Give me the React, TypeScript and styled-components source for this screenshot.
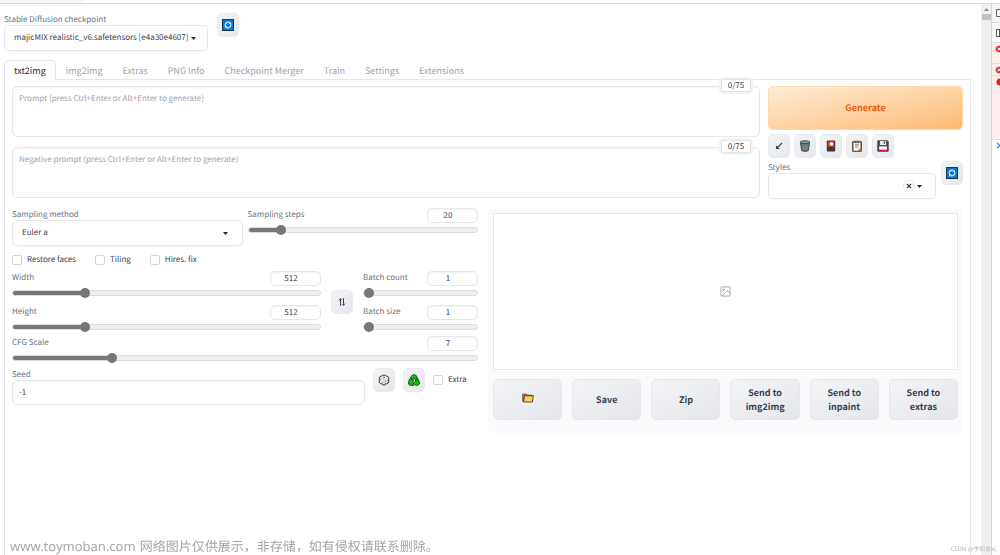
import React, { useState } from "react";
import styled, { createGlobalStyle, css } from "styled-components";

const GlobalStyle = createGlobalStyle`
  *, *::before, *::after { box-sizing: border-box; }
  body {
    margin: 0;
    background: #fff;
    color: #374151;
    font-family: "Noto Sans CJK SC", "Noto Sans", sans-serif;
    font-size: 8px;
    line-height: 12px;
    text-rendering: geometricPrecision;
  }
  button, input, select, textarea { font: inherit; color: inherit; margin: 0; text-rendering: inherit; }
  button { cursor: pointer; }
`;

const Window = styled.div`
  display: flex;
  flex-direction: column;
  min-height: 100vh;
`;

const BrowserEdge = styled.div`
  height: 4px;
  flex: none;
  background: linear-gradient(90deg, #f5f5f5 0 83px, #fff 83px);
  border-bottom: 1px solid #d9dadb;
`;

const Viewport = styled.div`
  display: flex;
  flex: 1;
`;

const Page = styled.main`
  flex: 1;
  min-width: 0;
  display: flex;
  flex-direction: column;
  padding: 9px 10px 0 4px;
`;

const ScrollBar = styled.div`
  flex: none;
  width: 10px;
  background: #f0f0f0;
  display: flex;
  flex-direction: column;
  align-items: center;
  gap: 3px;
  padding-top: 4px;
`;

const ScrollThumb = styled.div`
  width: 9px;
  height: 6px;
  background: #c1c1c1;
`;

const DevTools = styled.aside`
  flex: none;
  width: 9px;
  border-left: 1px solid #d5d5d5;
  overflow: hidden;
`;

const DevCell = styled.div<{ $height: number; $tone?: "bar" | "error" }>`
  height: ${(p) => p.$height}px;
  padding: 2px 0 0 3px;
  border-bottom: 1px solid ${(p) => (p.$tone === "error" ? "#fbd5d5" : p.$tone ? "#dcdcdc" : "transparent")};
  background: ${(p) => (p.$tone === "error" ? "#ffeeee" : p.$tone ? "#f6f6f6" : "#fff")};
  svg { display: block; }
`;

const Label = styled.label`
  display: block;
  height: 12px;
  line-height: 14px;
  color: #6b7280;
  white-space: nowrap;
`;

const ModelBar = styled.div`
  display: flex;
  gap: 9px;
  height: 47px;
`;

const ModelField = styled.div`
  width: 204px;
`;

const SelectWrap = styled.div`
  position: relative;
`;

const fieldBox = css`
  border: 1px solid #e5e7eb;
  border-radius: 5px;
  background: #fff;
  box-shadow: inset 0 1px 2px rgba(0, 0, 0, 0.05);
  outline: none;
`;

const Select = styled.select`
  ${fieldBox}
  appearance: none;
  display: block;
  width: 100%;
  height: 26px;
  padding: 0 10px 0 9px;
  box-shadow: 0 1px 2px rgba(0, 0, 0, 0.04);
`;

const Caret = styled.svg<{ $right: number }>`
  position: absolute;
  top: 12px;
  right: ${(p) => p.$right}px;
  pointer-events: none;
`;

const ClearButton = styled.button`
  position: absolute;
  top: 7px;
  right: 21px;
  width: 12px;
  height: 12px;
  padding: 0;
  display: grid;
  place-items: center;
  border: 1px solid #e5e7eb;
  border-radius: 50%;
  background: #fff;
`;

const ToolButton = styled.button`
  flex: none;
  width: 22px;
  height: 24px;
  padding: 0;
  display: grid;
  place-items: center;
  border: 1px solid #e8eaee;
  border-radius: 5px;
  background: linear-gradient(to bottom right, #f3f4f6, #e5e7eb);
`;

const TabList = styled.nav`
  display: flex;
  height: 20px;
  position: relative;
  margin-bottom: -1px;
`;

const Tab = styled.button<{ $active?: boolean }>`
  height: 20px;
  padding: 0 9px;
  border: 1px solid ${(p) => (p.$active ? "#e5e7eb" : "transparent")};
  border-bottom: 0;
  border-radius: 5px 5px 0 0;
  background: ${(p) => (p.$active ? "#fff" : "transparent")};
  color: ${(p) => (p.$active ? "#1f2937" : "#9ca3af")};
  font-size: 9px;
  line-height: 18px;
  white-space: nowrap;
`;

const Panel = styled.section`
  flex: 1;
  border: 1px solid #e5e7eb;
  border-bottom: 0;
  padding: 6px 7px 0;
`;

const TopArea = styled.div`
  display: flex;
  gap: 8px;
`;

const Prompts = styled.div`
  flex: 1;
  display: flex;
  flex-direction: column;
  gap: 10px;
`;

const PromptBox = styled.div`
  position: relative;
`;

const Prompt = styled.textarea`
  ${fieldBox}
  display: block;
  width: 100%;
  height: 51px;
  padding: 6px;
  resize: none;
  &::placeholder { color: #9ca3af; opacity: 1; }
`;

const Counter = styled.span`
  position: absolute;
  top: -7px;
  right: 9px;
  width: 30px;
  height: 13px;
  border: 1px solid #dfe1e5;
  border-radius: 2px;
  background: #fff;
  box-shadow: 0 0 0 2px #f3f4f5;
  line-height: 12px;
  text-align: center;
`;

const Actions = styled.div`
  width: 195px;
  display: flex;
  flex-direction: column;
`;

const Generate = styled.button`
  height: 44px;
  border: 1px solid #fed7aa;
  border-radius: 5px;
  background: linear-gradient(to bottom right, #ffedd5, #fdba74);
  color: #ea580c;
  font-size: 9px;
  font-weight: 700;
`;

const ToolRow = styled.div`
  display: flex;
  gap: 4px;
  margin-top: 4px;
`;

const StylesRow = styled.div`
  display: flex;
  gap: 5px;
  margin-top: 3px;
`;

const Grow = styled.div`
  flex: 1;
  min-width: 0;
`;

const WorkArea = styled.div`
  display: grid;
  grid-template-columns: 466fr 475fr;
  align-items: start;
  gap: 10px;
  margin-top: 9px;
`;

const Settings = styled.div`
  min-width: 0;
`;

const SamplingRow = styled.div`
  display: grid;
  grid-template-columns: 1fr 1fr;
  gap: 5px;
`;

const SliderBlock = styled.div`
  min-width: 0;
`;

const SliderHead = styled.div`
  display: flex;
  justify-content: space-between;
  height: 15px;
`;

const NumberBox = styled.input`
  ${fieldBox}
  width: 51px;
  height: 15px;
  padding: 0 9px 0 0;
  text-align: center;
  appearance: textfield;
  &::-webkit-inner-spin-button { appearance: none; margin: 0; }
`;

const Range = styled.input`
  appearance: none;
  display: block;
  width: 100%;
  height: 10px;
  margin-top: 2px;
  background: transparent;
  &::-webkit-slider-runnable-track {
    height: 6px;
    border: 1px solid #dcdcdc;
    border-radius: 3px;
    background: linear-gradient(90deg, #767676 0 var(--fill), #efefef var(--fill));
    background-origin: border-box;
  }
  &::-webkit-slider-thumb {
    appearance: none;
    width: 10px;
    height: 10px;
    margin-top: -3px;
    border-radius: 50%;
    background: #767676;
  }
`;

const CheckRow = styled.div`
  display: flex;
  gap: 19px;
  margin: 8px 0 5px;
`;

const CheckLabel = styled.label`
  display: flex;
  align-items: center;
  gap: 5px;
  white-space: nowrap;
`;

const CheckBox = styled.input`
  appearance: none;
  width: 10px;
  height: 10px;
  border: 1px solid #d1d5db;
  border-radius: 2px;
  background: #fff;
  &:checked { background: #767676; }
`;

const SizeRow = styled.div`
  display: flex;
  align-items: center;
  gap: 10px;
`;

const Stack = styled.div<{ $narrow?: boolean }>`
  display: flex;
  flex-direction: column;
  gap: 7px;
  ${(p) => (p.$narrow ? "width: 115px;" : "flex: 1;")}
`;

const CfgRow = styled.div`
  margin-top: 4px;
`;

const SeedRow = styled.div`
  display: flex;
  gap: 8px;
  margin-top: 5px;
`;

const SeedInput = styled.input`
  ${fieldBox}
  display: block;
  width: 100%;
  height: 25px;
  padding: 0 6px;
`;

const SeedTools = styled.div`
  display: flex;
  gap: 8px;
  width: 105px;
  align-items: flex-start;
`;

const SeedExtra = styled.div`
  padding-top: 6px;
`;

const Results = styled.div`
  min-width: 0;
  margin-top: 1px;
  padding: 4px 5px 13px;
  border-radius: 5px;
  background: #f9fafb;
`;

const Gallery = styled.div`
  height: 157px;
  display: grid;
  place-items: center;
  border: 1px solid #e5e7eb;
  background: #fff;
`;

const ResultActions = styled.div`
  display: grid;
  grid-template-columns: repeat(6, 1fr);
  gap: 10px;
  margin-top: 9px;
`;

const ResultButton = styled.button`
  height: 41px;
  padding: 0 12px;
  border: 1px solid #e5e7eb;
  border-radius: 5px;
  background: linear-gradient(to bottom right, #f3f4f6, #e5e7eb);
  color: #374151;
  font-size: 9px;
  font-weight: 700;
  line-height: 14px;
`;

const Watermark = styled.p`
  position: fixed;
  left: 10px;
  bottom: 0;
  margin: 0;
  display: flex;
  align-items: center;
  gap: 4px;
  color: #a6a6a6;
  font-size: 13px;
  line-height: 18px;
  white-space: nowrap;
`;

const Site = styled.span`
  font-family: "Noto Sans", sans-serif;
`;

const Credit = styled.p`
  position: fixed;
  right: 4px;
  bottom: 2px;
  margin: 0;
  color: #b5b5b5;
  font-size: 6px;
  line-height: 9px;
  white-space: nowrap;
`;

const RefreshIcon = () => (
  <svg width="12" height="12" viewBox="0 0 12 12" fill="none">
    <rect x=".5" y=".5" width="11" height="11" fill="#0078d7" stroke="#17384f" />
    <path d="M3.3 7A2.9 2.9 0 0 1 7.6 3.600M8.700 5A2.900 2.900 0 0 1 4.400 8.400" stroke="#e4f2fc" strokeWidth="1.200" />
    <path d="M9 2.600v2.500H6.500zM3 9.400V6.900h2.500z" fill="#e4f2fc" />
  </svg>
);

const ArrowIcon = () => (
  <svg width="12" height="12" viewBox="0 0 12 12" fill="none" stroke="#374151">
    <path d="M9 3L4.500 7.500" strokeWidth="1.100" />
    <path d="M3 5.200V9h3.800z" fill="#374151" stroke="none" />
  </svg>
);

const TrashIcon = () => (
  <svg width="12" height="12" viewBox="0 0 12 12">
    <path d="M1.4 2.4l1.3 8.4q3.3 1.2 6.6 0l1.3-8.4z" fill="#68777b" stroke="#30393c" strokeWidth=".8" />
    <ellipse cx="6" cy="2.2" rx="4.9" ry="1.5" fill="#87979b" stroke="#30393c" strokeWidth=".8" />
    <path d="M4 5l.4 5M6 5v5.3M8 5l-.4 5" stroke="#89989c" strokeWidth=".6" />
  </svg>
);

const CardIcon = () => (
  <svg width="12" height="12" viewBox="0 0 12 12">
    <rect x="1.8" y=".5" width="8.4" height="11" rx="1" fill="#333" />
    <rect x="2.8" y="1.3" width="6.4" height="6.4" fill="#f03a17" />
    <circle cx="6.4" cy="4" r="1.8" fill="#fff" />
    <path d="M2.8 7.7q3.2-2.4 6.4 0v2.8H2.8z" fill="#3d3a3a" />
  </svg>
);

const ClipboardIcon = () => (
  <svg width="12" height="12" viewBox="0 0 12 12">
    <rect x="1.5" y="1.4" width="9" height="10.2" rx=".7" fill="#a57b50" stroke="#463a30" strokeWidth=".8" />
    <path d="M2.8 2.8h6.4v5.4l-2 2.2H2.8z" fill="#fff" />
    <path d="M9.2 8.2h-2v2.2z" fill="#b9bcc0" />
    <path d="M4 2.8V1.6h1Q6-.4 7 1.6h1v1.2z" fill="#9ca3a8" stroke="#333" strokeWidth=".6" />
    <path d="M4 4.6h4M4 6h4M4 7.4h2.6" stroke="#555" strokeWidth=".6" />
  </svg>
);

const SaveIcon = () => (
  <svg width="12" height="12" viewBox="0 0 12 12">
    <path d="M.8.8h9.6l.8.8v9.6H.8z" fill="#55595d" stroke="#292c2f" strokeWidth=".8" />
    <path d="M3 1h6v4H3z" fill="#e8eaec" />
    <path d="M6.8 1.6H8v2.2H6.8z" fill="#333" />
    <path d="M2.2 6.4h7.6v3.4H2.2z" fill="#fff" />
    <path d="M2.2 9.8h7.6v1.4H2.2z" fill="#e3135c" />
  </svg>
);

const SwapIcon = () => (
  <svg width="10" height="10" viewBox="0 0 10 10" fill="none" stroke="#374151" strokeWidth="1">
    <path d="M3.5 8.8V1.8M2 3.400l1.500-1.800M6.500 1.200v7M8 6.600L6.500 8.400" />
    <path d="M3.500 1.600l1.100 1.300M6.500 8.400L5.400 7.100" />
  </svg>
);

const DiceIcon = () => (
  <svg width="12" height="12" viewBox="0 0 12 12" strokeLinejoin="round">
    <path d="M6 .8l4.7 2.4v5.4L6 11.2 1.3 8.6V3.2z" fill="#f4f4f4" stroke="#2d2d2d" strokeWidth=".9" />
    <path d="M1.5 3.4L6 5.8l4.5-2.4M6 5.8V11" fill="none" stroke="#999" strokeWidth=".5" />
    <circle cx="6" cy="3.4" r=".8" fill="#e02020" />
    <path d="M2.8 5.4v1M4.4 8.2v1M7.4 6.8v1M9.3 5.8v1M7.4 9v.8M9.3 7.8v.8" stroke="#222" strokeWidth=".8" />
  </svg>
);

const RecycleIcon = () => (
  <svg width="12" height="12" viewBox="0 0 12 12" strokeLinejoin="round">
    <g fill="#13c60d" stroke="#06340a" strokeWidth=".8">
      <path d="M3.400 2.200Q4.200.6 6 .6T8.600 2.200L9.600 4.600 7 5.600 5.800 3.800 4.800 5.600 2.600 4.400z" />
      <path d="M1.600 4.900l3.400.4.400 2-1 .4 1.200 1v2.700H2.400Q-.2 10.800.6 8z" />
      <path d="M10 5L11.300 8q.8 2.600-1.600 3.300H7.400L5.900 9.300l1.600-1.900.900.300L7.300 6z" />
    </g>
  </svg>
);

const FolderIcon = () => (
  <svg width="12" height="10" viewBox="0 0 12 10" strokeLinejoin="round">
    <path d="M.8 8.8V1.2h3.4l1 1h5v1.2" fill="#e09a1f" stroke="#33291c" strokeWidth=".8" />
    <path d="M1 .9h2.4v1.3H1z" fill="#e33a22" />
    <path d="M2.4 2.8h9l-1 6.2H1.600z" fill="#ffcf5c" stroke="#33291c" strokeWidth=".8" />
  </svg>
);

const ImageIcon = () => (
  <svg width="11" height="11" viewBox="0 0 24 24" fill="none" stroke="#9ca3af" strokeWidth="2" strokeLinejoin="round">
    <rect x="2" y="2" width="20" height="20" rx="2" />
    <circle cx="8" cy="8" r="2" />
    <path d="M22 16l-6-6L4 22" />
  </svg>
);

const CaretDown = ({ right }: { right: number }) => (
  <Caret $right={right} width="5" height="3" viewBox="0 0 5 3" fill="#1f2937">
    <path d="M0 0h5L2.5 3z" />
  </Caret>
);

type SliderProps = { id: string; label: string; min: number; max: number; step?: number; initial: number };

function Slider({ id, label, min, max, step = 1, initial }: SliderProps) {
  const [value, setValue] = useState(initial);
  const fraction = (value - min) / (max - min);
  const fill = { "--fill": `calc(5px + (100% - 10px) * ${fraction})` } as React.CSSProperties;
  const change = (e: React.ChangeEvent<HTMLInputElement>) => setValue(Number(e.target.value));
  return (
    <SliderBlock>
      <SliderHead>
        <Label htmlFor={id}>{label}</Label>
        <NumberBox type="number" aria-label={`${label} value`} min={min} max={max} value={value} onChange={change} />
      </SliderHead>
      <Range id={id} type="range" min={min} max={max} step={step} value={value} onChange={change} style={fill} />
    </SliderBlock>
  );
}

const Check = ({ label }: { label: string }) => (
  <CheckLabel>
    <CheckBox type="checkbox" />
    {label}
  </CheckLabel>
);

const tabs = ["txt2img", "img2img", "Extras", "PNG Info", "Checkpoint Merger", "Train", "Settings", "Extensions"];

const tools = [
  { name: "Read generation parameters", Icon: ArrowIcon },
  { name: "Clear prompt", Icon: TrashIcon },
  { name: "Show extra networks", Icon: CardIcon },
  { name: "Apply styles", Icon: ClipboardIcon },
  { name: "Save style", Icon: SaveIcon },
];

const ErrorMark = () => (
  <svg width="8" height="8" viewBox="0 0 8 8">
    <circle cx="4" cy="4" r="3.3" fill="#e0353f" />
    <path d="M2.6 2.6l2.8 2.8M5.4 2.6L2.6 5.4" stroke="#fff" strokeWidth=".9" />
  </svg>
);

export default function App() {
  const [active, setActive] = useState("txt2img");
  return (
    <Window>
      <GlobalStyle />
      <BrowserEdge />
      <Viewport>
        <Page>
          <ModelBar>
            <ModelField>
              <Label htmlFor="checkpoint">Stable Diffusion checkpoint</Label>
              <SelectWrap>
                <Select id="checkpoint">
                  <option>majicMIX realistic_v6.safetensors [e4a30e4607]</option>
                </Select>
                <CaretDown right={12} />
              </SelectWrap>
            </ModelField>
            <ToolButton aria-label="Refresh checkpoints"><RefreshIcon /></ToolButton>
          </ModelBar>

          <TabList>
            {tabs.map((tab) => (
              <Tab key={tab} $active={tab === active} onClick={() => setActive(tab)}>{tab}</Tab>
            ))}
          </TabList>

          <Panel>
            <TopArea>
              <Prompts>
                <PromptBox>
                  <Prompt aria-label="Prompt" placeholder="Prompt (press Ctrl+Enter or Alt+Enter to generate)" />
                  <Counter>0/75</Counter>
                </PromptBox>
                <PromptBox>
                  <Prompt aria-label="Negative prompt" placeholder="Negative prompt (press Ctrl+Enter or Alt+Enter to generate)" />
                  <Counter>0/75</Counter>
                </PromptBox>
              </Prompts>
              <Actions>
                <Generate>Generate</Generate>
                <ToolRow>
                  {tools.map(({ name, Icon }) => (
                    <ToolButton key={name} aria-label={name}><Icon /></ToolButton>
                  ))}
                </ToolRow>
                <StylesRow>
                  <Grow>
                    <Label htmlFor="styles">Styles</Label>
                    <SelectWrap>
                      <Select id="styles"><option></option></Select>
                      <ClearButton aria-label="Clear styles">
                        <svg width="6" height="6" viewBox="0 0 6 6" stroke="#1f2937" strokeWidth="1.1">
                          <path d="M.8.8l4.4 4.4M5.2.8L.8 5.2" />
                        </svg>
                      </ClearButton>
                      <CaretDown right={14} />
                    </SelectWrap>
                  </Grow>
                  <ToolButton aria-label="Refresh styles"><RefreshIcon /></ToolButton>
                </StylesRow>
              </Actions>
            </TopArea>

            <WorkArea>
              <Settings>
                <SamplingRow>
                  <div>
                    <Label htmlFor="sampler">Sampling method</Label>
                    <SelectWrap>
                      <Select id="sampler"><option>Euler a</option></Select>
                      <CaretDown right={15} />
                    </SelectWrap>
                  </div>
                  <Slider id="steps" label="Sampling steps" min={1} max={150} initial={20} />
                </SamplingRow>
                <CheckRow>
                  <Check label="Restore faces" />
                  <Check label="Tiling" />
                  <Check label="Hires. fix" />
                </CheckRow>
                <SizeRow>
                  <Stack>
                    <Slider id="width" label="Width" min={64} max={2048} step={8} initial={512} />
                    <Slider id="height" label="Height" min={64} max={2048} step={8} initial={512} />
                  </Stack>
                  <ToolButton aria-label="Swap width and height"><SwapIcon /></ToolButton>
                  <Stack $narrow>
                    <Slider id="batch-count" label="Batch count" min={1} max={100} initial={1} />
                    <Slider id="batch-size" label="Batch size" min={1} max={8} initial={1} />
                  </Stack>
                </SizeRow>
                <CfgRow>
                  <Slider id="cfg" label="CFG Scale" min={1} max={30} initial={7} />
                </CfgRow>
                <SeedRow>
                  <Grow>
                    <Label htmlFor="seed">Seed</Label>
                    <SeedInput id="seed" type="text" defaultValue="-1" />
                  </Grow>
                  <SeedTools>
                    <ToolButton aria-label="Random seed"><DiceIcon /></ToolButton>
                    <ToolButton aria-label="Reuse seed"><RecycleIcon /></ToolButton>
                    <SeedExtra><Check label="Extra" /></SeedExtra>
                  </SeedTools>
                </SeedRow>
              </Settings>

              <Results>
                <Gallery><ImageIcon /></Gallery>
                <ResultActions>
                  <ResultButton aria-label="Open folder"><FolderIcon /></ResultButton>
                  <ResultButton>Save</ResultButton>
                  <ResultButton>Zip</ResultButton>
                  <ResultButton>Send to img2img</ResultButton>
                  <ResultButton>Send to inpaint</ResultButton>
                  <ResultButton>Send to extras</ResultButton>
                </ResultActions>
              </Results>
            </WorkArea>
          </Panel>
        </Page>

        <ScrollBar>
          <svg width="5" height="3" viewBox="0 0 5 3" fill="#8b8b8b"><path d="M0 3h5L2.5 0z" /></svg>
          <ScrollThumb />
        </ScrollBar>

        <DevTools>
          <DevCell $height={19} $tone="bar">
            <svg width="8" height="12" viewBox="0 0 8 12" fill="none" stroke="#666"><path d="M8 3.5H1.5v7H8" /></svg>
          </DevCell>
          <DevCell $height={20} $tone="bar">
            <svg width="8" height="12" viewBox="0 0 8 12" fill="none" stroke="#555"><path d="M8 4.5H1.5v7H8M4.5 4v8" /></svg>
          </DevCell>
          <DevCell $height={21} $tone="error"><ErrorMark /></DevCell>
          <DevCell $height={12} $tone="error"><ErrorMark /></DevCell>
          <DevCell $height={64} $tone="error">
            <svg width="8" height="8" viewBox="0 0 8 8"><circle cx="5" cy="4" r="3.5" fill="#d8232a" /></svg>
          </DevCell>
          <DevCell $height={20}>
            <svg width="6" height="8" viewBox="0 0 6 8" fill="none" stroke="#367cf1" strokeWidth="1.2"><path d="M2 1l3 2.500L2 6" /></svg>
          </DevCell>
        </DevTools>
      </Viewport>
      <Watermark><Site>www.toymoban.com</Site>网络图片仅供展示，非存储，如有侵权请联系删除。</Watermark>
      <Credit>CSDN @李知恩xj</Credit>
    </Window>
  );
}
